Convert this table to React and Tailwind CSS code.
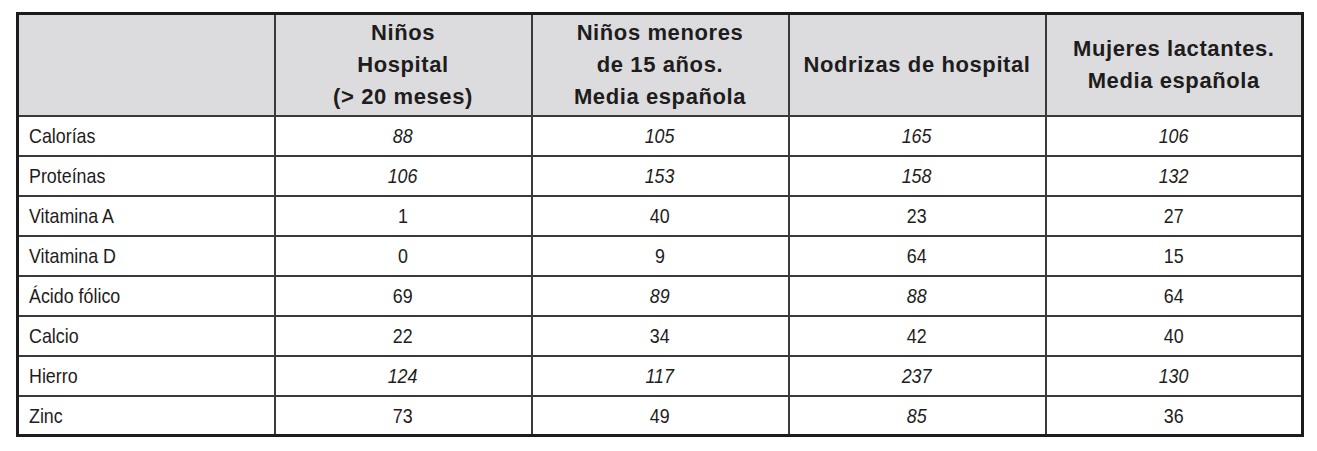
import React from 'react';

const headers = [
  '',
  ['Niños', 'Hospital', '(> 20 meses)'],
  ['Niños menores', 'de 15 años.', 'Media española'],
  ['Nodrizas de hospital'],
  ['Mujeres lactantes.', 'Media española'],
];

// i = italic value
const rows = [
  ['Calorías', ['88', 'i'], ['105', 'i'], ['165', 'i'], ['106', 'i']],
  ['Proteínas', ['106', 'i'], ['153', 'i'], ['158', 'i'], ['132', 'i']],
  ['Vitamina A', ['1'], ['40'], ['23'], ['27']],
  ['Vitamina D', ['0'], ['9'], ['64'], ['15']],
  ['Ácido fólico', ['69'], ['89', 'i'], ['88', 'i'], ['64']],
  ['Calcio', ['22'], ['34'], ['42'], ['40']],
  ['Hierro', ['124', 'i'], ['117', 'i'], ['237', 'i'], ['130', 'i']],
  ['Zinc', ['73'], ['49'], ['85', 'i'], ['36']],
];

const App = () => {
  return (
    <div className="bg-white w-[1317px] h-[451px] pt-[12px] pl-[16px]" style={{ fontFamily: '"Liberation Sans", Arial, sans-serif' }}>
      <table className="table-fixed border-collapse w-[1288px] border-[3px] border-[#1c1c1c] text-[#1e1c1c]">
        <thead>
          <tr className="bg-[#dcdcde]">
            {headers.map((h, i) => (
              <th
                key={i}
                className="h-[102px] border-2 border-[#3a3a3a] text-center align-middle font-bold text-[22px] leading-[32px] tracking-[0.6px] p-0"
              >
                {Array.isArray(h) && h.map((line) => <div key={line}>{line}</div>)}
              </th>
            ))}
          </tr>
        </thead>
        <tbody>
          {rows.map((row) => (
            <tr key={row[0]}>
              <td className="h-[40px] border-2 border-[#3a3a3a] pl-[10px] p-0 align-middle text-[21px]">
                <span className="inline-block origin-left scale-x-[0.85]">{row[0]}</span>
              </td>
              {row.slice(1).map(([v, it], j) => (
                <td key={j} className="h-[40px] border-2 border-[#3a3a3a] p-0 text-center align-middle text-[21px]">
                  <span className={`inline-block scale-x-[0.85] ${it ? 'italic' : ''}`}>{v}</span>
                </td>
              ))}
            </tr>
          ))}
        </tbody>
      </table>
    </div>
  );
};

export default App;
